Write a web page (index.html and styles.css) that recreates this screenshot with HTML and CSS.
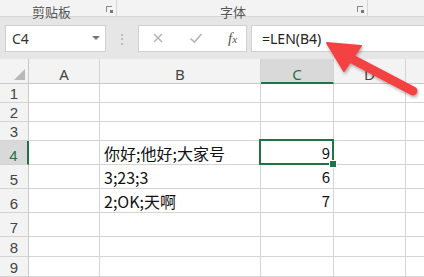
FILE: index.html
```html
<!DOCTYPE html>
<html lang="zh-CN">
  <head>
    <meta charset="UTF-8" />
    <title>LEN 函数示例</title>
    <link rel="stylesheet" href="styles.css">
  </head>
  <body>
    <div class="sheet-app">
      <!-- RIBBON: group labels -->
      <div class="ribbon">
        <div class="ribbon-group group-clipboard">
          <span class="group-label">剪贴板</span>
          <span class="launcher"></span>
        </div>
        <div class="ribbon-group group-font">
          <span class="group-label">字体</span>
          <span class="launcher"></span>
        </div>
        <div class="ribbon-group group-rest"></div>
      </div>

      <!-- FORMULA BAR -->
      <div class="formula-bar">
        <div class="name-box">
          <span>C4</span>
          <span class="name-caret"></span>
        </div>
        <div class="grip">⋮</div>
        <div class="fx-buttons">
          <svg class="fx-icon" width="12" height="12" viewBox="0 0 12 12" fill="none" stroke="#b5b5b5" stroke-width="1.4">
            <line x1="2" y1="2" x2="10" y2="10"/>
            <line x1="10" y1="2" x2="2" y2="10"/>
          </svg>
          <svg class="fx-icon" width="14" height="12" viewBox="0 0 14 12" fill="none" stroke="#b5b5b5" stroke-width="1.6">
            <path d="M1.5 6.5l4 3.5 7-8"/>
          </svg>
          <span class="fx-label">f<i>x</i></span>
        </div>
        <div class="formula-input">=LEN(B4)</div>
      </div>

      <!-- GRID -->
      <div class="grid">
        <div class="corner"></div>
        <div class="col-head">A</div>
        <div class="col-head">B</div>
        <div class="col-head active">C</div>
        <div class="col-head">D</div>
        <div class="col-head last"></div>

        <div class="row-head">1</div><div class="cell"></div><div class="cell"></div><div class="cell"></div><div class="cell"></div><div class="cell last"></div>
        <div class="row-head">2</div><div class="cell"></div><div class="cell"></div><div class="cell"></div><div class="cell"></div><div class="cell last"></div>
        <div class="row-head">3</div><div class="cell"></div><div class="cell"></div><div class="cell"></div><div class="cell"></div><div class="cell last"></div>
        <div class="row-head active">4</div><div class="cell"></div><div class="cell text">你好;他好;大家号</div><div class="cell num selected">9</div><div class="cell"></div><div class="cell last"></div>
        <div class="row-head">5</div><div class="cell"></div><div class="cell text">3;23;3</div><div class="cell num">6</div><div class="cell"></div><div class="cell last"></div>
        <div class="row-head">6</div><div class="cell"></div><div class="cell text">2;OK;天啊</div><div class="cell num">7</div><div class="cell"></div><div class="cell last"></div>
        <div class="row-head">7</div><div class="cell"></div><div class="cell"></div><div class="cell"></div><div class="cell"></div><div class="cell last"></div>
        <div class="row-head">8</div><div class="cell"></div><div class="cell"></div><div class="cell"></div><div class="cell"></div><div class="cell last"></div>
        <div class="row-head">9</div><div class="cell"></div><div class="cell"></div><div class="cell"></div><div class="cell"></div><div class="cell last"></div>
      </div>

      <!-- Red callout arrow pointing at the formula -->
      <svg class="callout" width="424" height="277" viewBox="0 0 424 277">
        <defs>
          <filter id="shadow" x="-10%" y="-10%" width="130%" height="130%">
            <feDropShadow dx="1" dy="2" stdDeviation="1.5" flood-color="#000" flood-opacity="0.3"/>
          </filter>
        </defs>
        <g filter="url(#shadow)" fill="#f44242" stroke="#f44242" stroke-linejoin="round" stroke-linecap="round">
          <line x1="350" y1="58" x2="413" y2="91" stroke-width="9"/>
          <polygon points="327,43 361,46 344,71" stroke-width="2"/>
        </g>
      </svg>
    </div>
  </body>
</html>
```

FILE: styles.css
```css
/* RESET */
* {
  margin: 0;
  padding: 0;
  box-sizing: border-box;
}
:root {
  --excel-green: #217346;
  --grid-line: #d4d4d4;
  --head-bg: #f3f3f3;
  --head-text: #444444;
}

body {
  font-family: "Noto Sans", "Noto Sans CJK SC", sans-serif;
  background: #ffffff;
  overflow: hidden;
}

.sheet-app {
  position: relative;
  width: 424px;
  height: 277px;
  overflow: hidden;
}

/* RIBBON STRIP */
.ribbon {
  display: flex;
  height: 17px;
  background: #f3f3f3;
  border-bottom: 1px solid #d6d6d6;
}
.ribbon-group {
  position: relative;
  border-right: 1px solid #d6d6d6;
  height: 16px;
}
.group-clipboard {
  width: 117px;
  padding-left: 32px;
}
.group-font {
  width: 251px;
  padding-left: 103px;
}
.group-rest {
  flex: 1;
  border-right: none;
}
.group-label {
  font-family: "Noto Sans CJK SC", sans-serif;
  font-size: 13px;
  line-height: 14px;
  color: #555;
}
.launcher {
  position: absolute;
  right: 4px;
  top: 6px;
  width: 6px;
  height: 6px;
  border-left: 1px solid #888;
  border-top: 1px solid #888;
}
.launcher::after {
  content: "";
  position: absolute;
  right: -1px;
  bottom: -1px;
  width: 3px;
  height: 3px;
  background: #777;
}

/* FORMULA BAR */
.formula-bar {
  display: flex;
  align-items: center;
  height: 42px;
  padding: 0 0 0 5px;
  background: #e6e6e6;
}
.name-box {
  display: flex;
  align-items: center;
  justify-content: space-between;
  width: 101px;
  height: 27px;
  background: #fff;
  border: 1px solid #d0d0d0;
  padding: 0 5px 0 6px;
  font-size: 14px;
  color: #333;
}
.name-caret {
  width: 0;
  height: 0;
  border-left: 4px solid transparent;
  border-right: 4px solid transparent;
  border-top: 4px solid #777;
}
.grip {
  width: 32px;
  text-align: center;
  color: #b0b0b0;
  font-size: 14px;
}
.fx-buttons {
  display: flex;
  align-items: center;
  width: 109px;
  height: 27px;
  background: #fff;
  border: 1px solid #d0d0d0;
  padding-left: 13px;
}
.fx-icon {
  margin-right: 25px;
}
.fx-label {
  font-family: "Liberation Serif", serif;
  font-style: italic;
  font-size: 15px;
  color: #555;
}
.fx-label i {
  font-size: 11px;
}
.formula-input {
  flex: 1;
  height: 27px;
  margin-left: 4px;
  background: #fff;
  border: 1px solid #d0d0d0;
  border-right: none;
  padding-left: 10px;
  font-size: 14px;
  line-height: 25px;
  color: #222;
}

/* GRID */
.grid {
  display: grid;
  grid-template-columns: 29px 71px 161px 73px 72px 1fr;
  grid-template-rows: 25px 19px 19px 19px 24px 24px 24px 24px 20px 20px;
}
.corner {
  position: relative;
  background: var(--head-bg);
  border-right: 1px solid #c8c8c8;
  border-bottom: 1px solid #c8c8c8;
}
.corner::after {
  content: "";
  position: absolute;
  right: 3px;
  bottom: 3px;
  width: 0;
  height: 0;
  border-left: 11px solid transparent;
  border-bottom: 11px solid #b8b8b8;
}
.col-head {
  background: var(--head-bg);
  border-bottom: 1px solid #c8c8c8;
  border-right: 1px solid var(--grid-line);
  text-align: center;
  font-size: 15px;
  line-height: 30px;
  color: var(--head-text);
}
.col-head.active {
  background: #d9d9d9;
  color: var(--excel-green);
  border-bottom: 2px solid var(--excel-green);
}
.col-head.last {
  border-right: none;
}
.row-head {
  background: var(--head-bg);
  border-right: 1px solid #c8c8c8;
  border-bottom: 1px solid var(--grid-line);
  text-align: center;
  font-family: "Liberation Sans", sans-serif;
  font-size: 15px;
  color: var(--head-text);
  display: flex;
  align-items: flex-end;
  justify-content: center;
  line-height: 17px;
}
.row-head.active {
  background: #d9d9d9;
  color: var(--excel-green);
  border-right: 2px solid var(--excel-green);
}
.cell {
  position: relative;
  border-right: 1px solid var(--grid-line);
  border-bottom: 1px solid var(--grid-line);
  font-family: "Noto Sans CJK SC", sans-serif;
  font-size: 16px;
  color: #111;
  display: flex;
  align-items: flex-end;
  white-space: nowrap;
  line-height: 22px;
}
.cell.last {
  border-right: none;
}
.cell.text {
  padding-left: 4px;
  overflow: visible;
}
.cell.num {
  justify-content: flex-end;
  padding-right: 3px;
  font-size: 15px;
}

/* Active cell outline and fill handle */
.cell.selected::after {
  content: "";
  position: absolute;
  left: -2px;
  top: -2px;
  right: -1px;
  bottom: -1px;
  border: 2px solid var(--excel-green);
}
.cell.selected::before {
  content: "";
  position: absolute;
  right: -4px;
  bottom: -4px;
  width: 6px;
  height: 6px;
  background: var(--excel-green);
  border: 1px solid #fff;
  z-index: 2;
}

/* CALLOUT ARROW */
.callout {
  position: absolute;
  left: 0;
  top: 0;
  pointer-events: none;
}
```
